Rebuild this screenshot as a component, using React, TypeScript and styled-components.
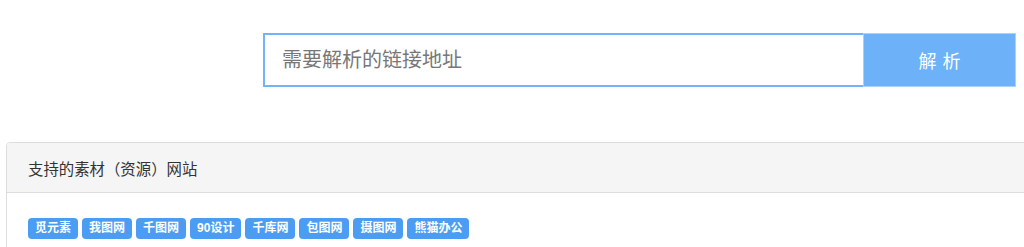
import styled, { createGlobalStyle } from "styled-components";

const GlobalStyle = createGlobalStyle`
  html, body {
    margin: 0;
    padding: 0;
    background: #fff;
    overflow-x: hidden;
    font-family: "Helvetica Neue", "Liberation Sans", "Noto Sans CJK SC", sans-serif;
  }
`;

const SearchRow = styled.div`
  display: flex;
  padding: 33px 0 0 263px;
`;

const Input = styled.input`
  box-sizing: border-box;
  width: 600px;
  height: 54px;
  border: 2px solid #72b4f6;
  border-right: none;
  padding: 0 17px;
  font-size: 20px;
  color: #555;
  outline: none;
  font-family: inherit;
  &::placeholder {
    color: #777;
  }
`;

const Button = styled.button`
  box-sizing: border-box;
  width: 153px;
  height: 54px;
  border: 1px solid #a9d1fa;
  background: #6db2f8;
  color: #fff;
  font-size: 18px;
  letter-spacing: 6px;
  padding-left: 12px;
  font-family: inherit;
  cursor: pointer;
`;

const Panel = styled.div`
  margin: 55px 0 0 6px;
  width: 1040px;
  border: 1px solid #ddd;
  border-radius: 4px;
`;

const PanelHeading = styled.div`
  box-sizing: border-box;
  height: 50px;
  display: flex;
  align-items: center;
  padding: 0 21px;
  background: #f5f5f5;
  border-bottom: 1px solid #ddd;
  border-radius: 3px 3px 0 0;
  font-size: 15.4px;
  color: #333;
`;

const PanelBody = styled.div`
  display: flex;
  flex-wrap: wrap;
  gap: 4px;
  padding: 25px 21px 20px;
`;

const Tag = styled.span`
  display: inline-block;
  background: #4a9df2;
  color: #fff;
  font-size: 12px;
  font-weight: 600;
  line-height: 12px;
  padding: 4px 7px 5px;
  border-radius: 4px;
`;

const sites = ["觅元素", "我图网", "千图网", "90设计", "千库网", "包图网", "摄图网", "熊猫办公"];

export default function App() {
  return (
    <>
      <GlobalStyle />
      <SearchRow>
        <Input placeholder="需要解析的链接地址" />
        <Button>解析</Button>
      </SearchRow>
      <Panel>
        <PanelHeading>支持的素材（资源）网站</PanelHeading>
        <PanelBody>
          {sites.map((s) => (
            <Tag key={s}>{s}</Tag>
          ))}
        </PanelBody>
      </Panel>
    </>
  );
}
